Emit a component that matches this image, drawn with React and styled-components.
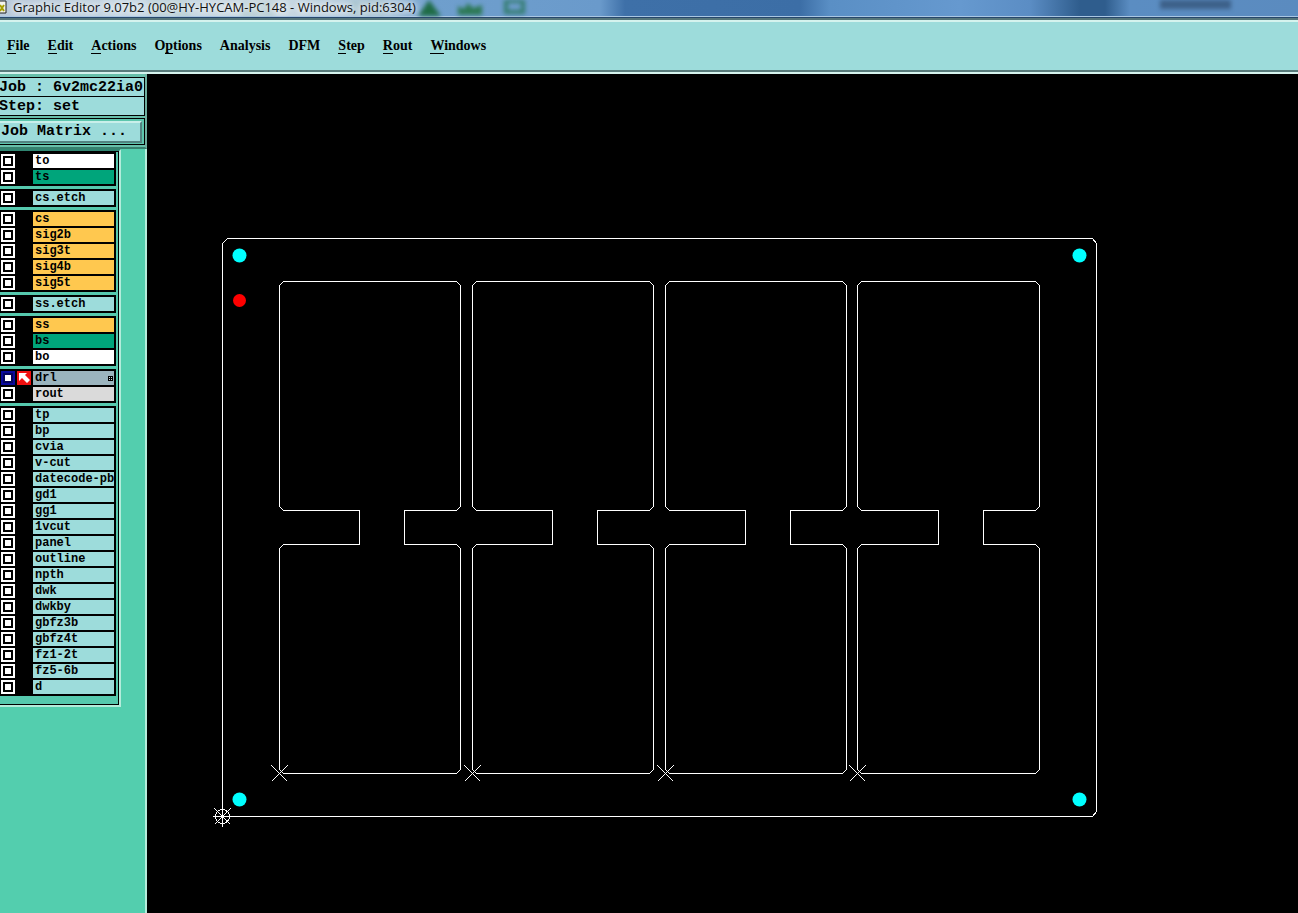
import React, { useState } from 'react'
import styled, { createGlobalStyle } from 'styled-components'

const GlobalStyle = createGlobalStyle`
body{
margin:0;
background-color:#000;
}
*{
box-sizing:border-box;
}
`

const Container = styled.div`
display:flex;
flex-direction:column;
height:100vh;
overflow:hidden;
`

//title bar
const TitleBar = styled.header`
position:relative;
display:flex;
align-items:flex-start;
gap:5px;
height:18px;
flex-shrink:0;
overflow:hidden;
border-bottom:1px solid #27476b;
box-shadow:inset 0 -1px 0 #a9c6e2;
background:linear-gradient(90deg, #b9c9da 0, #c5d6e3 120px, #c9d9e2 280px, #a9c4da 390px, #6f9fcd 430px, #6a9acb 600px, #3e70a8 625px, #3c6ea6 800px, #5a8fc5 830px, #6699cf 960px, #5b8dc4 1030px, #2f5d8d 1080px, #2f5d8d 1105px, #5b8dc2 1130px, #5b8bbf 100%);
`
const TitleArt = styled.svg`
position:absolute;
left:0;
top:0;
filter:blur(2px);
`
const AppIcon = styled.svg`
position:relative;
flex-shrink:0;
`
const Title = styled.h1`
position:relative;
margin:0;
font-family:"Open Sans", "Noto Sans", sans-serif;
font-size:13px;
font-weight:400;
line-height:14px;
color:#111;
white-space:nowrap;
text-shadow:0 0 6px #fff, 0 0 6px #fff;
`

//menu bar
const MenuBar = styled.nav`
display:flex;
align-items:center;
gap:18px;
height:56px;
flex-shrink:0;
padding:0 7px;
background-color:#9ddcdb;
border-top:2px solid #55767b;
border-bottom:2px solid #d5f3ee;
box-shadow:inset 0 2px 0 #d5f3ee, inset 0 -2px 0 #587b7b;
`
const MenuButton = styled.button`
padding:0;
border:none;
background:none;
font-family:"Liberation Serif", serif;
font-size:14px;
font-weight:bold;
line-height:18px;
color:#000;
cursor:pointer;
`
const Mnemonic = styled.span`
border-bottom:1px solid #000;
`

const Main = styled.main`
display:flex;
flex:1;
min-height:0;
`

//side panel
const Sidebar = styled.aside`
width:147px;
flex-shrink:0;
background-color:#53ceae;
border-right:2px solid #b4ecdb;
`
const JobPanel = styled.section`
padding:3px 0 2px;
margin-right:-2px;
background-color:#67bfaa;
border-right:2px solid #6fae9f;
border-bottom:2px solid #37806e;
font-family:"Liberation Mono", monospace;
font-size:15px;
font-weight:bold;
`
const InfoBox = styled.div`
border:1px solid #000;
border-left:none;
background-color:#9ddcdb;
`
const InfoRow = styled.div`
height:18px;
line-height:19px;
white-space:pre;
overflow:hidden;
text-indent:-1px;
& + &{
height:19px;
border-top:1px solid #000;
}
`
const MatrixFrame = styled.div`
margin-top:2px;
padding:2px 2px 1px 0;
border:1px solid #000;
border-left:none;
background-color:#5dc6ad;
`
const MatrixButton = styled.button`
display:block;
width:100%;
height:22px;
padding:0 1px;
border:2px solid #c9efea;
border-left:none;
border-right-color:#538381;
border-bottom-color:#538381;
background-color:#9ddcdb;
font:inherit;
line-height:18px;
color:#000;
text-align:left;
cursor:pointer;
`
const LayerPanel = styled.section`
display:flex;
flex-direction:column;
gap:3px;
width:121px;
padding:1px 2px 9px 0;
background-color:#56c9ae;
border-top:2px solid #2f8470;
border-right:2px solid #b4ecdb;
border-bottom:2px solid #b4ecdb;
box-shadow:inset 0 1px 0 #000, inset -1px -1px 0 #000;
`
const LayerGroup = styled.div`
display:flex;
flex-direction:column;
gap:2px;
width:116px;
padding:2px 2px 2px 1px;
background-color:#000;
`
const LayerRow = styled.label`
display:grid;
grid-template-columns:14px 14px 1fr;
column-gap:2px;
height:14px;
`
const Check = styled.input`
appearance:none;
width:14px;
height:14px;
margin:0;
border:2px solid ${(props) => (props.checked ? '#0a0a9c' : '#fff')};
background-color:#fff;
box-shadow:inset 0 0 0 2px ${(props) => (props.checked ? '#05055c' : '#000')};
`
const LayerName = styled.span`
display:flex;
align-items:center;
justify-content:space-between;
height:14px;
padding:0 1px 0 2px;
overflow:hidden;
white-space:nowrap;
font-family:"Liberation Mono", monospace;
font-size:12px;
font-weight:bold;
line-height:14px;
color:#000;
background-color:${(props) => props.$color};
`

const Canvas = styled.div`
flex:1;
min-width:0;
background-color:#000;
`
const Drawing = styled.svg`
display:block;
width:100%;
height:100%;
`
/////////////////////////////////////////

const menus = [
  { name: 'File', key: 0 },
  { name: 'Edit', key: 0 },
  { name: 'Actions', key: 0 },
  { name: 'Options', key: 1 },
  { name: 'Analysis' },
  { name: 'DFM' },
  { name: 'Step', key: 0 },
  { name: 'Rout', key: 0 },
  { name: 'Windows', key: 0 },
]

const WHITE = '#fff'
const MASK = '#00a57b'
const MISC = '#9ddcdb'
const SIGNAL = '#ffc84f'
const DRILL = '#9bb4be'
const ROUT = '#dadada'

const groups = [
  [['to', WHITE], ['ts', MASK]],
  [['cs.etch', MISC]],
  [['cs', SIGNAL], ['sig2b', SIGNAL], ['sig3t', SIGNAL], ['sig4b', SIGNAL], ['sig5t', SIGNAL]],
  [['ss.etch', MISC]],
  [['ss', SIGNAL], ['bs', MASK], ['bo', WHITE]],
  [['drl', DRILL], ['rout', ROUT]],
  ['tp', 'bp', 'cvia', 'v-cut', 'datecode-pbc', 'gd1', 'gg1', '1vcut', 'panel', 'outline',
    'npth', 'dwk', 'dwkby', 'gbfz3b', 'gbfz4t', 'fz1-2t', 'fz5-6b', 'd'].map((n) => [n, MISC]),
]

// left edge, inner notch edges and right edge of each board
const boards = [
  [279, 359, 404, 460],
  [472, 552, 597, 653],
  [665, 745, 790, 846],
  [857, 938, 983, 1039],
]

const boardPath = ([l, a, b, r]) =>
  `M${l + 4} 281H${r - 4}L${r} 285V506L${r - 4} 510H${b}V544H${r - 4}L${r} 548V769L${r - 4} 773` +
  `H${l + 4}L${l} 769V548L${l + 4} 544H${a}V510H${l + 4}L${l} 506V285Z`

const holes = [[239, 255], [1079, 255], [239, 799], [1079, 799]]

const MenuLabel = ({ name, at }) => {
  if (at === undefined) return name
  return (
    <>
      {name.slice(0, at)}
      <Mnemonic>{name[at]}</Mnemonic>
      {name.slice(at + 1)}
    </>
  )
}

const Layer = ({ name, color, checked, onToggle }) => (
  <LayerRow>
    <Check type='checkbox' checked={checked} onChange={onToggle} />
    {checked ? (
      <svg width='14' height='14' viewBox='0 0 14 14' aria-hidden='true'>
        <rect width='14' height='14' fill='#f01010' />
        <path d='M2 2H10L8 4L13 9L10 12L5 7L2 10Z' fill='#fff' />
      </svg>
    ) : (
      <span />
    )}
    <LayerName $color={color}>
      {name}
      {name === 'drl' && (
        <svg width='5' height='5' viewBox='0 0 5 5' shapeRendering='crispEdges' aria-hidden='true'>
          <rect width='5' height='5' fill='#000' />
          <path d='M1 1h1v1h-1zM3 1h1v1h-1zM1 3h1v1h-1zM3 3h1v1h-1z' fill='#c8d8dc' />
        </svg>
      )}
    </LayerName>
  </LayerRow>
)

const App = () => {
  const [active, setActive] = useState('drl')

  return (
    <Container>
      <GlobalStyle />
      <TitleBar>
        <TitleArt width='1298' height='17' aria-hidden='true'>
          <path d='M429 0L441 16H418Z' fill='#1f6b45' />
          <path d='M458 15V6L464 9L468 3L473 8L482 5V15Z' fill='#2c7853' />
          <path d='M506 1H523V12H506Z' fill='none' stroke='#337c6d' strokeWidth='4' />
          <path d='M1160 0H1231V9H1160Z' fill='#304f72' opacity='0.7' />
          <path d='M150 0H190V17H150ZM240 2H275V17H240ZM350 0H385V15H350Z' fill='#9fc0c4' opacity='0.4' />
        </TitleArt>
        <AppIcon width='8' height='16' viewBox='0 0 8 16' aria-hidden='true'>
          <path d='M0 1H6V13H0' fill='#f4f4ea' stroke='#222' />
          <path d='M0 5L4 11M4 5L0 11' stroke='#a8a000' strokeWidth='2' />
        </AppIcon>
        <Title>Graphic Editor 9.07b2 (00@HY-HYCAM-PC148 - Windows, pid:6304)</Title>
      </TitleBar>
      <MenuBar>
        {menus.map((m) => (
          <MenuButton key={m.name} type='button'>
            <MenuLabel name={m.name} at={m.key} />
          </MenuButton>
        ))}
      </MenuBar>
      <Main>
        <Sidebar>
          <JobPanel>
            <InfoBox>
              <InfoRow>Job : 6v2mc22ia0</InfoRow>
              <InfoRow>Step: set</InfoRow>
            </InfoBox>
            <MatrixFrame>
              <MatrixButton type='button'>Job Matrix ...</MatrixButton>
            </MatrixFrame>
          </JobPanel>
          <LayerPanel>
            {groups.map((rows) => (
              <LayerGroup key={rows[0][0]}>
                {rows.map(([name, color]) => (
                  <Layer
                    key={name}
                    name={name}
                    color={color}
                    checked={active === name}
                    onToggle={() => setActive(active === name ? '' : name)}
                  />
                ))}
              </LayerGroup>
            ))}
          </LayerPanel>
        </Sidebar>
        <Canvas>
          <Drawing viewBox='147 74 1151 839' preserveAspectRatio='xMinYMin meet'>
            <g transform='translate(0.5 0.5)' fill='none' stroke='#fff' shapeRendering='crispEdges'>
              <path d='M227 238H1092L1096 243V811L1092 816H222V243Z' />
              {boards.map((b) => (
                <path key={b[0]} d={boardPath(b)} />
              ))}
              {boards.map(([x]) => (
                <path key={x} d={`M${x - 8} 765L${x + 8} 781M${x + 8} 765L${x - 8} 781`} />
              ))}
              {/* datum */}
              <circle cx='222' cy='816' r='7' />
              <path d='M212 816H232M222 806V826M214 808L230 824M230 808L214 824' />
              <circle cx='222' cy='816' r='1' fill='#fff' />
            </g>
            <g transform='translate(0.5 0.5)'>
              {holes.map(([x, y]) => (
                <circle key={`${x}-${y}`} cx={x} cy={y} r='7' fill='#0ff' />
              ))}
              <circle cx='239' cy='300' r='6.5' fill='#f00' />
            </g>
          </Drawing>
        </Canvas>
      </Main>
    </Container>
  )
}

export default App
